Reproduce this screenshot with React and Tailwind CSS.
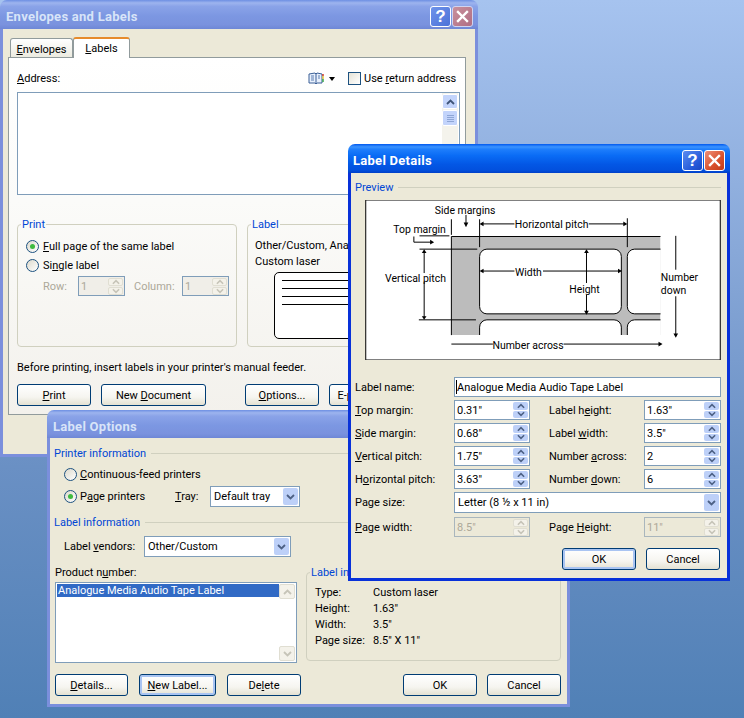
import React from "react";

const ACTIVE_TITLE = "bg-[linear-gradient(180deg,#0058EE_0%,#3A93FF_10%,#1E7EFC_18%,#0A6CF5_40%,#0357E5_70%,#0250DD_90%,#0040C8_100%)] text-white";
const INACTIVE_TITLE = "bg-[linear-gradient(180deg,#6D8FE3_0%,#9DB4EE_10%,#8AA3E8_22%,#7C97E2_55%,#7A92DE_85%,#6E87D6_100%)] text-[#D8E4F8]";

function Chev({ up = false, color = "#4D6185", w = 9 }) {
  return (
    <svg width={w} height="6" viewBox="0 0 9 6" className="block">
      <path d={up ? "M1 5 L4.5 1.5 L8 5" : "M1 1 L4.5 4.5 L8 1"} fill="none" stroke={color} strokeWidth="1.8" />
    </svg>
  );
}

function TitleButtons({ active }) {
  return (
    <div className="flex gap-[1px] items-center">
      <div className={`w-[21px] h-[21px] rounded-[3px] border border-white flex items-center justify-center text-[17px] leading-none font-bold text-white font-['Liberation_Sans',sans-serif] ${active ? "bg-[linear-gradient(135deg,#5B8CF0,#2458D8_70%,#1C46C0)]" : "bg-[linear-gradient(135deg,#6E93EA,#4D72D8)] border-[#C8D6F6]"}`}>?</div>
      <div className={`w-[21px] h-[21px] rounded-[3px] border flex items-center justify-center ${active ? "border-white bg-[linear-gradient(135deg,#F09078,#D8502C_60%,#C23A18)]" : "border-[#D0D4F0] bg-[linear-gradient(135deg,#C8909C,#B06E84)]"}`}>
        <svg width="13" height="13" viewBox="0 0 13 13"><path d="M2 2 L11 11 M11 2 L2 11" stroke="white" strokeWidth="2.4" strokeLinecap="square" /></svg>
      </div>
    </div>
  );
}

function Win({ className, title, active, titleH, children }) {
  return (
    <div className={`absolute flex flex-col rounded-t-[7px] overflow-hidden ${className}`}>
      <div className={`flex items-center justify-between shrink-0 pr-[5px] pt-[4px] text-[13px] font-bold tracking-[0.27px] ${titleH} ${active ? `pl-[5px] ${ACTIVE_TITLE}` : `pl-[6px] ${INACTIVE_TITLE}`}`}>
        <span>{title}</span>
        {titleH === "h-[29px]" && <TitleButtons active={active} />}
      </div>
      <div className={`flex-1 min-h-0 flex flex-col bg-[#ECE9D8] border-x-[3px] border-b-[3px] ${active ? "border-[#0831D9]" : "border-[#7B8FDC]"}`}>
        {children}
      </div>
    </div>
  );
}

function Btn({ children, className = "", focus = false }) {
  return (
    <button className={`flex items-center justify-center h-[22px] shrink-0 rounded-[3px] border border-[#003C74] text-black bg-[linear-gradient(180deg,#FFFFFF_0%,#F6F5F0_60%,#E4E1D2_100%)] ${focus ? "shadow-[inset_0_0_0_2px_#A9C4F2]" : ""} ${className}`}>
      <span>{children}</span>
    </button>
  );
}

function Radio({ on = false }) {
  return (
    <span className="w-[13px] h-[13px] shrink-0 rounded-full border border-[#1C5180] bg-[linear-gradient(135deg,#DCD9CC,#FFFFFF)] flex items-center justify-center">
      {on && <span className="w-[5px] h-[5px] rounded-full bg-[#3FBA3F]" />}
    </span>
  );
}

function Spin({ value, disabled = false, soft = false, className = "" }) {
  return (
    <div className={`flex h-[20px] items-stretch border p-[1px] ${soft ? "border-[#7F9DB9] bg-[#F0EEE8] text-[#ACA899]" : disabled ? "border-[#A9B6BD] bg-[#ECE9D8] text-[#ACA899]" : "border-[#7F9DB9] bg-white"} ${className}`}>
      <span className="flex-1 pl-[1px] self-center overflow-hidden">{value}</span>
      <div className="w-[15px] flex flex-col gap-[1px]">
        {[true, false].map((u) => (
          <div key={String(u)} className={`flex-1 flex items-center justify-center rounded-[2px] ${disabled || soft ? "bg-[#F4F2EA] border border-[#E0DED2]" : "bg-[#BDD0F8]"}`}>
            <Chev up={u} w={8} color={disabled || soft ? "#C6C4B8" : "#4D6185"} />
          </div>
        ))}
      </div>
    </div>
  );
}

function Select({ value, className = "" }) {
  return (
    <div className={`flex items-stretch border border-[#7F9DB9] bg-white p-[1px] ${className}`}>
      <span className="flex-1 pl-[2px] self-center overflow-hidden whitespace-nowrap">{value}</span>
      <div className="w-[15px] flex items-center justify-center rounded-[2px] bg-[#BDD0F8]">
        <Chev />
      </div>
    </div>
  );
}

function Section({ children, className = "" }) {
  return (
    <div className={`flex items-center gap-[5px] h-[13px] text-[#0046D5] ${className}`}>
      <span className="whitespace-nowrap">{children}</span>
      <span className="flex-1 h-[1px] bg-[#D0D0BF]" />
    </div>
  );
}

function BookIcon() {
  return (
    <svg width="16" height="13" viewBox="0 0 16 13">
      <path d="M1 2 L7 1 L8 2 L9 1 L14 2 L14 11 L9 11 L8 12 L7 11 L1 11 Z" fill="#E8F0FC" stroke="#3A5F96" />
      <path d="M8 2 V12" stroke="#3A5F96" />
      <path d="M3 4 H6 M3 6 H6 M10 4 H12 M10 6 H12 M3 8 H6" stroke="#5A7DB0" />
      <path d="M15 2 V4" stroke="#D43A2A" strokeWidth="1.5" />
      <path d="M15 4 V7" stroke="#E5C43A" strokeWidth="1.5" />
      <path d="M15 7 V10" stroke="#3AA64A" strokeWidth="1.5" />
    </svg>
  );
}

function Arrow({ d }) {
  return <path d={d} fill="black" stroke="none" />;
}

function Diagram() {
  return (
    <svg viewBox="60 180 1068 482" className="w-[356px] h-[160px] block">
      <defs>
        <clipPath id="sheet"><rect x="318" y="290" width="630" height="297" /></clipPath>
      </defs>
      <rect x="60" y="180" width="1068" height="482" fill="white" stroke="black" strokeWidth="3" />
      <g clipPath="url(#sheet)">
        <rect x="318" y="290" width="630" height="297" fill="#BCBCBC" />
        <rect x="403" y="328" width="427" height="195" rx="22" fill="white" stroke="black" strokeWidth="3" />
        <rect x="848" y="328" width="200" height="195" rx="22" fill="white" stroke="black" strokeWidth="3" />
        <rect x="403" y="541" width="427" height="150" rx="22" fill="white" stroke="black" strokeWidth="3" />
        <rect x="848" y="541" width="200" height="150" rx="22" fill="white" stroke="black" strokeWidth="3" />
      </g>
      <g stroke="black" strokeWidth="3" fill="none">
        <path d="M318 290 H948 M318 290 V587" />
        <path d="M318 238 V285 M222 288 H312 M205 290 V307 H258" />
        <path d="M403 238 V322 M848 235 V322" />
        <path d="M362 225 V252" />
        <path d="M410 252 H508 M732 252 H842" />
        <path d="M222 328 H396 M220 541 H392" />
        <path d="M236 335 V400 M236 426 V535" />
        <path d="M410 394 H508 M594 394 H825" />
        <path d="M725 335 V430 M725 465 V518" />
        <path d="M994 288 V390 M994 470 V585" />
        <path d="M318 614 H443 M656 614 H945" />
      </g>
      <Arrow d="M266 307 L254 300 V314 Z" />
      <Arrow d="M362 262 L355 248 H369 Z" />
      <Arrow d="M403 252 L415 245 V259 Z" />
      <Arrow d="M848 252 L836 245 V259 Z" />
      <Arrow d="M236 328 L229 340 H243 Z" />
      <Arrow d="M236 541 L229 530 H243 Z" />
      <Arrow d="M403 394 L415 387 V401 Z" />
      <Arrow d="M832 394 L820 387 V401 Z" />
      <Arrow d="M725 328 L718 340 H732 Z" />
      <Arrow d="M725 526 L718 514 H732 Z" />
      <Arrow d="M994 595 L987 582 H1001 Z" />
      <Arrow d="M954 614 L942 607 V621 Z" />
      <g fontSize="31.5" fill="black">
        <text x="268" y="221">Side margins</text>
        <text x="143" y="278">Top margin</text>
        <text x="620" y="263" textAnchor="middle">Horizontal pitch</text>
        <text x="118" y="428">Vertical pitch</text>
        <text x="550" y="408" textAnchor="middle">Width</text>
        <text x="719" y="461" textAnchor="middle">Height</text>
        <text x="949" y="424">Number</text>
        <text x="949" y="463">down</text>
        <text x="549" y="628" textAnchor="middle">Number across</text>
      </g>
    </svg>
  );
}

function SpinRow({ label, value, label2, value2 }) {
  return (
    <>
      <span>{label}</span>
      <Spin value={value} />
      <span className="pl-[19px]">{label2}</span>
      <Spin value={value2} />
    </>
  );
}

export default function App() {
  return (
    <div className="relative w-[744px] h-[718px] overflow-hidden bg-[linear-gradient(180deg,#A6C3EF_0%,#88A8D8_35%,#6A90C4_65%,#5080B6_100%)] text-[11px] leading-[13px] text-black font-['Roboto',sans-serif]">
      {/* Envelopes and Labels */}
      <Win className="left-0 top-0 w-[478px] h-[457px]" title="Envelopes and Labels" titleH="h-[29px]">
        <div className="pl-[5px] pt-[7px]">
          <div className="flex items-end pl-[2px] h-[21px]">
            <div className="w-[63px] h-[19px] flex items-center justify-center rounded-t-[3px] border border-b-0 border-[#919B9C] bg-[linear-gradient(180deg,#FFFFFF,#ECEBE0)]"><span className="pt-[2px]"><u>E</u>nvelopes</span></div>
            <div className="w-[57px] h-[21px] -mb-[1px] relative z-10 flex items-center justify-center rounded-t-[3px] border-x border-[#919B9C] border-t-2 border-t-[#E68B2C] bg-white"><span><u>L</u>abels</span></div>
          </div>
          <div className="w-[458px] h-[358px] border border-[#919B9C] bg-[linear-gradient(180deg,#FFFFFF_0%,#FBFBF9_40%,#F3F1EC_100%)] pl-[8px] pr-[6px] pt-[13px]">
            <div className="flex items-center h-[15px]">
              <span className="flex-1"><u>A</u>ddress:</span>
              <BookIcon />
              <svg width="6" height="4" viewBox="0 0 6 4" className="ml-[5px]"><path d="M0 0 H6 L3 4 Z" fill="black" /></svg>
              <span className="ml-[13px] w-[13px] h-[13px] border border-[#1C5180] bg-[linear-gradient(135deg,#E4E2D6,#FFFFFF)]" />
              <span className="ml-[3px] w-[95px] whitespace-nowrap">Use <u>r</u>eturn address</span>
            </div>
            <div className="mt-[6px] w-[443px] h-[103px] border border-[#7F9DB9] bg-white flex justify-end">
              <div className="w-[16px] mr-[1px] bg-[#F4F3EC] flex flex-col gap-[1px] pt-[1px]">
                <div className="h-[15px] rounded-[2px] bg-[#C3D4FB] border border-white flex items-center justify-center"><Chev up color="#3E5478" /></div>
                <div className="h-[16px] rounded-[2px] bg-[#C3D4FB] border border-white flex flex-col items-center justify-center gap-[1px]">
                  <span className="w-[7px] h-[1px] bg-[#8EA6D6]" /><span className="w-[7px] h-[1px] bg-[#8EA6D6]" /><span className="w-[7px] h-[1px] bg-[#8EA6D6]" /><span className="w-[7px] h-[1px] bg-[#8EA6D6]" />
                </div>
              </div>
            </div>
            <div className="flex gap-[10px] mt-[23px]">
              <fieldset className="w-[220px] min-w-0 shrink-0 h-[129px] border border-[#D0D0BF] rounded-[4px] pl-[8px]">
                <legend className="-ml-[5px] px-[1px] text-[#0046D5]">Print</legend>
                <div className="flex items-center gap-[4px] mt-[9px]"><Radio on /><span><u>F</u>ull page of the same label</span></div>
                <div className="flex items-center gap-[4px] mt-[6px]"><Radio /><span>Si<u>n</u>gle label</span></div>
                <div className="flex items-center mt-[4px] pl-[17px] text-[#ACA899]">
                  <span className="w-[35px]">Row:</span>
                  <Spin value="1" soft className="w-[47px]" />
                  <span className="w-[57px] pl-[9px]">Column:</span>
                  <Spin value="1" soft className="w-[47px]" />
                </div>
              </fieldset>
              <fieldset className="w-[212px] min-w-0 shrink-0 h-[129px] border border-[#D0D0BF] rounded-[4px] pl-[7px]">
                <legend className="-ml-[4px] px-[1px] text-[#0046D5]">Label</legend>
                <div className="mt-[8px] whitespace-nowrap overflow-hidden">Other/Custom, Analogue Media Audio Tape Label</div>
                <div className="mt-[3px]">Custom laser</div>
                <div className="mt-[4px] ml-[19px] w-[170px] h-[67px] rounded-[5px] border border-black bg-white pt-[7px] pl-[7px] pr-[7px] flex flex-col gap-[7px]">
                  <span className="h-[1px] bg-black" /><span className="h-[1px] bg-black" /><span className="h-[1px] bg-black" /><span className="h-[1px] bg-black" />
                </div>
              </fieldset>
            </div>
            <div className="mt-[14px]">Before printing, insert labels in your printer's manual feeder.</div>
            <div className="flex mt-[10px]">
              <Btn className="w-[74px]"><u>P</u>rint</Btn>
              <Btn className="w-[105px] ml-[10px]">New <u>D</u>ocument</Btn>
              <Btn className="w-[74px] ml-[39px]"><u>O</u>ptions...</Btn>
              <Btn className="w-[128px] ml-[10px] whitespace-nowrap">E-postage Properties...</Btn>
            </div>
          </div>
        </div>
      </Win>

      {/* Label Options */}
      <Win className="left-[47px] top-[410px] w-[523px] h-[297px] z-10" title="Label Options" titleH="h-[28px]">
        <div className="pl-[4px] pr-[5px] pt-[9px] flex flex-col">
          <Section>Printer information</Section>
          <div className="flex items-center gap-[3px] mt-[8px] ml-[10px]"><Radio /><span><u>C</u>ontinuous-feed printers</span></div>
          <div className="flex items-center mt-[5px] ml-[10px] h-[21px]">
            <Radio on />
            <span className="ml-[3px] w-[95px]">P<u>a</u>ge printers</span>
            <span className="w-[35px]"><u>T</u>ray:</span>
            <Select value="Default tray" className="w-[90px] h-[21px]" />
          </div>
          <Section className="mt-[9px]">Label information</Section>
          <div className="flex items-center mt-[7px] ml-[10px] h-[21px]">
            <span className="w-[80px]">Label <u>v</u>endors:</span>
            <Select value="Other/Custom" className="w-[147px] h-[21px]" />
          </div>
          <div className="flex mt-[9px]">
            <div className="w-[242px] ml-[1px]">
              <div>Product n<u>u</u>mber:</div>
              <div className="mt-[3px] h-[81px] border border-[#7F9DB9] bg-white flex p-[1px]">
                <div className="flex-1"><div className="h-[13px] bg-[#316AC5] text-white pl-[1px]">Analogue Media Audio Tape Label</div></div>
                <div className="w-[16px] flex flex-col justify-between">
                  <div className="h-[15px] rounded-[2px] bg-[#F4F2EA] border border-[#E0DED2] flex items-center justify-center"><Chev up color="#C6C4B8" /></div>
                  <div className="h-[15px] rounded-[2px] bg-[#F4F2EA] border border-[#E0DED2] flex items-center justify-center"><Chev color="#C6C4B8" /></div>
                </div>
              </div>
            </div>
            <fieldset className="w-[255px] min-w-0 ml-[9px] h-[95px] border border-[#D0D0BF] rounded-[4px] pl-[8px]">
              <legend className="-ml-[5px] px-[1px] text-[#0046D5]">Label information</legend>
              <div className="grid grid-cols-[58px_1fr] gap-y-[3px] mt-[7px]">
                <span>Type:</span><span>Custom laser</span>
                <span>Height:</span><span>1.63"</span>
                <span>Width:</span><span>3.5"</span>
                <span>Page size:</span><span>8.5" X 11"</span>
              </div>
            </fieldset>
          </div>
          <div className="flex mt-[11px] ml-[1px]">
            <Btn className="w-[73px]"><u>D</u>etails...</Btn>
            <Btn className="w-[77px] ml-[11px]" focus><u>N</u>ew Label...</Btn>
            <Btn className="w-[74px] ml-[11px]">De<u>l</u>ete</Btn>
            <Btn className="w-[74px] ml-[102px]">OK</Btn>
            <Btn className="w-[74px] ml-[10px]">Cancel</Btn>
          </div>
        </div>
      </Win>

      {/* Label Details */}
      <Win className="left-[348px] top-[144px] w-[382px] h-[437px] z-20" title="Label Details" active titleH="h-[29px]">
        <div className="pl-[4px] pr-[6px] pt-[8px] flex flex-col">
          <Section>Preview</Section>
          <div className="mt-[6px] ml-[10px]"><Diagram /></div>
          <div className="mt-[17px] grid grid-cols-[99px_76px_114px_77px] gap-y-[3px] items-center">
            <span>Label name:</span>
            <div className="col-span-3 h-[20px] border border-[#7F9DB9] bg-white flex items-center pl-[2px] relative">
              <span>Analogue Media Audio Tape Label</span>
              <span className="absolute left-[1px] top-[2px] w-[1px] h-[14px] bg-black" />
            </div>
            <SpinRow label={<><u>T</u>op margin:</>} value='0.31"' label2={<>Label h<u>e</u>ight:</>} value2='1.63"' />
            <SpinRow label={<><u>S</u>ide margin:</>} value='0.68"' label2={<>Label <u>w</u>idth:</>} value2='3.5"' />
            <SpinRow label={<><u>V</u>ertical pitch:</>} value='1.75"' label2={<>Number <u>a</u>cross:</>} value2="2" />
            <SpinRow label={<>H<u>o</u>rizontal pitch:</>} value='3.63"' label2={<>Number <u>d</u>own:</>} value2="6" />
            <span>Page size:</span>
            <Select value="Letter (8 ½ x 11 in)" className="col-span-3 h-[21px]" />
            <span className="mt-[1px]"><u>P</u>age width:</span>
            <Spin value='8.5"' disabled className="mt-[1px]" />
            <span className="pl-[19px] mt-[1px]">Page <u>H</u>eight:</span>
            <Spin value='11"' disabled className="mt-[1px]" />
          </div>
          <div className="flex justify-end mt-[11px] gap-[10px] mr-[1px]">
            <Btn className="w-[74px]" focus>OK</Btn>
            <Btn className="w-[74px]">Cancel</Btn>
          </div>
        </div>
      </Win>
    </div>
  );
}
